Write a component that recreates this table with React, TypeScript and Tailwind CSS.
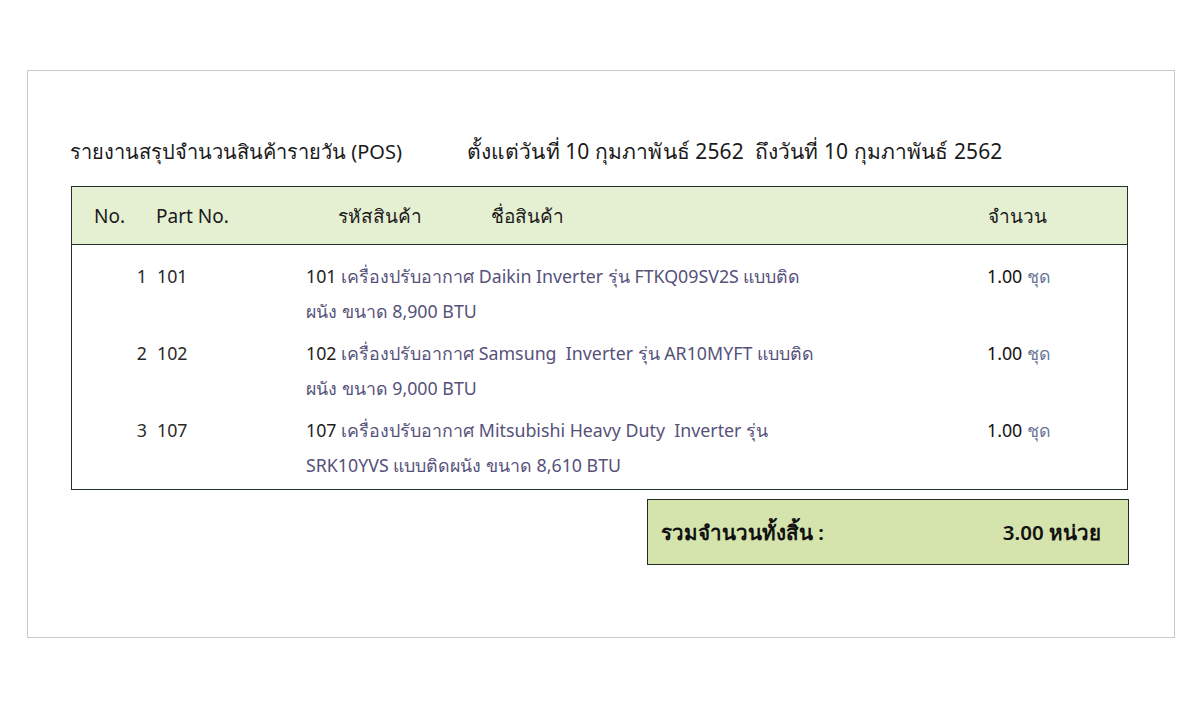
const rows = [
  {
    no: "1",
    part: "101",
    lines: ["101 เครื่องปรับอากาศ Daikin Inverter รุ่น FTKQ09SV2S แบบติด", "ผนัง ขนาด 8,900 BTU"],
  },
  {
    no: "2",
    part: "102",
    lines: ["102 เครื่องปรับอากาศ Samsung  Inverter รุ่น AR10MYFT แบบติด", "ผนัง ขนาด 9,000 BTU"],
  },
  {
    no: "3",
    part: "107",
    lines: ["107 เครื่องปรับอากาศ Mitsubishi Heavy Duty  Inverter รุ่น", "SRK10YVS แบบติดผนัง ขนาด 8,610 BTU"],
  },
];

function DescLine({ text }: { text: string }) {
  // first token (the code) is darker than the rest
  const sp = text.indexOf(" ");
  const head = /^\d+$/.test(text.slice(0, sp)) ? text.slice(0, sp) : "";
  const rest = head ? text.slice(sp) : text;
  return (
    <div className="h-[35px] leading-[35px] whitespace-pre">
      {head && <span className="text-[#1e1e1e]">{head}</span>}
      <span className="text-[#56527a]">{rest}</span>
    </div>
  );
}

export default function App() {
  return (
    <div
      className="w-[1200px] h-[707px] bg-white pt-[70px] pl-[27px]"
      style={{ fontFamily: '"Noto Sans", "Open Sans", sans-serif' }}
    >
      <div className="w-[1148px] h-[568px] border border-[#c9c9c9] pl-[43px] pt-[65px]">
        <div className="flex items-center h-[32px] text-[20px] text-[#1a1a1a] -ml-[1px]">
          <span className="w-[397px] whitespace-nowrap">รายงานสรุปจำนวนสินค้ารายวัน (POS)</span>
          <span className="whitespace-pre text-[21px] tracking-[0.1px]">
            ตั้งแต่วันที่ 10 กุมภาพันธ์ 2562  ถึงวันที่ 10 กุมภาพันธ์ 2562
          </span>
        </div>

        <div className="mt-[18px] w-[1057px] border border-[#243030]">
          <div className="flex items-center h-[58px] pt-[2px] bg-[#e5efd2] border-b border-[#243030] text-[19px] text-[#1a1a1a]">
            <span className="w-[84px] pl-[22px]">No.</span>
            <span className="w-[182px]">Part No.</span>
            <span className="w-[153px]">รหัสสินค้า</span>
            <span className="w-[497px]">ชื่อสินค้า</span>
            <span>จำนวน</span>
          </div>
          <div className="flex flex-col gap-[7px] pt-[14px] pb-[6px] text-[17.8px]">
            {rows.map((r) => (
              <div key={r.no} className="flex">
                <span className="w-[75px] text-right leading-[35px] text-[#2a2a2a]">{r.no}</span>
                <span className="w-[159px] pl-[10px] leading-[35px] text-[#2a2a2a]">{r.part}</span>
                <div className="w-[681px]">
                  {r.lines.map((l, i) => (
                    <DescLine key={i} text={l} />
                  ))}
                </div>
                <span className="leading-[35px] whitespace-nowrap">
                  <span className="text-[#111]">1.00</span>{" "}
                  <span className="text-[#6a7898]">ชุด</span>
                </span>
              </div>
            ))}
          </div>
        </div>

        <div className="ml-[576px] mt-[9px] w-[482px] h-[66px] border border-[#1e2a22] bg-[#d5e3ad] flex items-center justify-between pl-[13px] pr-[27px] text-[20.5px] font-semibold text-[#111]">
          <span>รวมจำนวนทั้งสิ้น :</span>
          <span>3.00 หน่วย</span>
        </div>
      </div>
    </div>
  );
}
